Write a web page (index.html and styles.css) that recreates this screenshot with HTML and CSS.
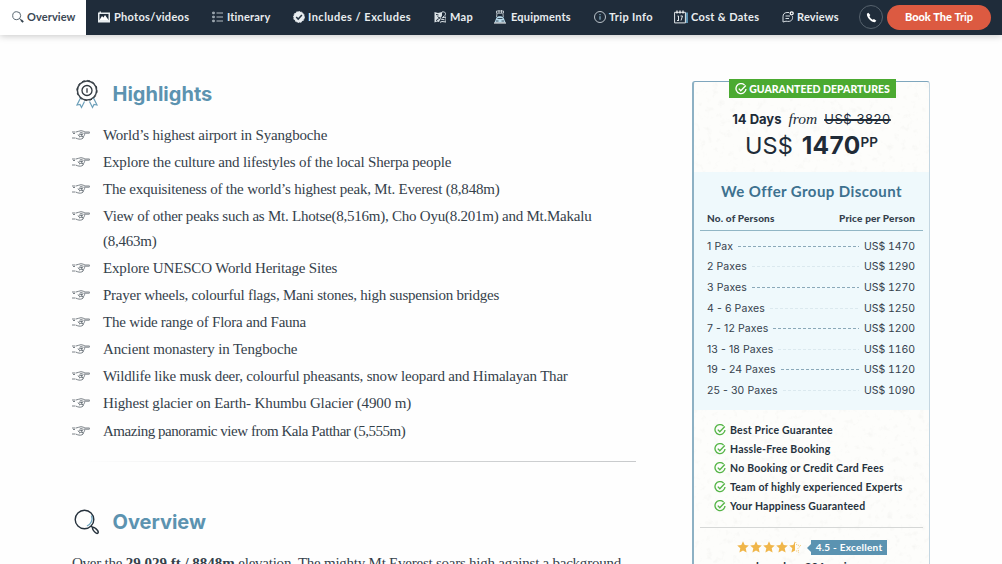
FILE: index.html
```html
<!DOCTYPE html>
<html lang="en">
<head>
<meta charset="utf-8">
<title>Everest Trip</title>
<link rel="stylesheet" href="styles.css">
</head>
<body>
<svg class="defs" aria-hidden="true">
  <symbol id="check" viewBox="0 0 12 12"><path d="M9.600 2.100A5 5 0 1 0 11 6M3.800 5.600 5.800 7.700 10.800 2.500" fill="none" stroke="currentColor" stroke-width="1.350"/></symbol>
  <symbol id="hand" viewBox="0 0 18 12"><path d="M0 3h3.500M0 9h3.500M1 4.500h2M4 3c2-.1 3-1.300 5-1.300 1.500 0 3 .8 4 1.300h4.200c.8 0 .8 1.200 0 1.200H11.500M4 9.200c2 .8 4 1.400 6 .6 1.500-.6 2-2 1.500-2.600 1.200-.6 1.500-2 .5-2.500M7.500 4.300c1-1 2-1 3.500 0M6.500 6.300c2-1.500 3-1 4.500-.5M7.500 8.200c1-1.300 2.500-1 3.500-.5M6 5.500l2 2.500M9 4.500l1.500 4" fill="none" stroke="#5a636b" stroke-width=".8"/></symbol>
  <symbol id="star" viewBox="0 0 12 12"><path d="m6 .3 1.700 3.800 4.100.4-3.100 2.800.9 4.200L6 9.400l-3.600 2.100.9-4.200L.2 4.500l4.100-.4z" fill="#f0b64a"/></symbol>
  <symbol id="lens" viewBox="0 0 26 26"><circle cx="10.500" cy="10.500" r="9.300" fill="none" stroke="#26323d" stroke-width="1.400"/><path d="M17.400 6.500a8 8 0 0 1-4.500 10.500" fill="none" stroke="#6fa6c0" stroke-width="1.300"/><path d="m17 17 1.800 1.600M18.700 18.400c1.600-.4 5.500 2.900 5.600 4.700-.4 1.900-1.900 1.400-3 .4-1.500-1.300-3.300-3.400-2.600-5.100z" fill="none" stroke="#26323d" stroke-width="1.500"/></symbol>
</svg>

<nav class="nav">
  <a class="nav-link active n-overview"><svg class="nav-icon" viewBox="0 0 12 12"><circle cx="4.700" cy="4.700" r="4" fill="none" stroke="#5b6872"/><path d="m7.600 7.600 1.200 1.200" stroke="#35434f"/><path d="m9 9 2.200 2.200" stroke="#35434f" stroke-width="1.800"/></svg><span>Overview</span></a>
  <a class="nav-link n-photos"><svg class="nav-icon" viewBox="0 0 12 12"><path d="M0 1.500h1.500V.5H3v1h9v10H0z" fill="#e8edf0"/><path d="M1.500 3h9v6h-9z" fill="#1f2c3a"/><path d="m1.500 9 2.500-4 1.500 1.500L7 4l3.500 5z" fill="#fff"/></svg><span>Photos/videos</span></a>
  <a class="nav-link n-itinerary"><svg class="nav-icon" viewBox="0 0 12 12"><g fill="none" stroke="#c5ced4" stroke-width=".9"><path d="M.7 1.200h1.600v1.500H.7zM.7 5.200h1.600v1.500H.7zM.7 9.200h1.600v1.500H.7zM4.500 2H11M4.500 6H11M4.500 10H11"/></g></svg><span>Itinerary</span></a>
  <a class="nav-link n-includes"><svg class="nav-icon" viewBox="0 0 12 12"><circle cx="6" cy="6" r="5.400" fill="#e8edf0" stroke="#e8edf0" stroke-dasharray="1.700 1"/><path d="m3.200 6 2 2.100 3.700-4" fill="none" stroke="#253442" stroke-width="1.500"/></svg><span>Includes / Excludes</span></a>
  <a class="nav-link n-map"><svg class="nav-icon" viewBox="0 0 12 12"><path d="M.5 1 4 2l4-1v3.500L5 11l-2-.5-2.500 1z" fill="#dce3e7"/><path d="M2 3.500 4.500 4M2.500 10c0-3 3.500-1 3.500-4M3.500 5.500l2 1.500" fill="none" stroke="#1f2c3a"/><path d="M8 1c5-1 4 4 1 5M8 6.800l4-.8v5l-4-.5-2 .8M6.500 8l4 .8" fill="none" stroke="#dce3e7"/></svg><span>Map</span></a>
  <a class="nav-link n-equip"><svg class="nav-icon" viewBox="0 0 12 14"><path d="M2.500 1h7v2.200h-7z" fill="none" stroke="#dce3e7" stroke-width=".8"/><path d="M5 0v3M7.500 0v3M3 3.500 2.500 7M9 4l.3 3" fill="none" stroke="#dce3e7" stroke-width=".8"/><path d="M2.500 7.500c2-2 5-1.500 7 0l2 5H.5z" fill="#b9dced"/><path d="M4.500 5h3M3.500 8.500h5M2 11h2.500M7.500 11H10" stroke="#1f2c3a" stroke-width=".8"/><path d="M0 13h12" stroke="#fff"/></svg><span>Equipments</span></a>
  <a class="nav-link n-info"><svg class="nav-icon" viewBox="0 0 12 12"><circle cx="6" cy="6" r="5.500" fill="none" stroke="#cdd5da" stroke-width=".9"/><path d="M6 5.200v3.500M6 3v1.200" stroke="#9acce3" stroke-width="1"/></svg><span>Trip Info</span></a>
  <a class="nav-link n-cost"><svg class="nav-icon wide" viewBox="0 0 14 13"><path d="M11.500 2H14v10.500h-2.500z" fill="#5c92b2"/><path d="M.6 1.800h10.800v10.600H.6z" fill="none" stroke="#e0e6e9"/><path d="M3 0v3M6 0v3M9 0v3" stroke="#fff" stroke-width="1.200"/><path d="M3.500 5.500h1v4.500M3 10h2M6.500 5.500h2L7 10" fill="none" stroke="#e0e6e9"/></svg><span>Cost &amp; Dates</span></a>
  <a class="nav-link n-reviews"><svg class="nav-icon" viewBox="0 0 12 12"><path d="M7 1.500H5a4.300 4.300 0 0 0-4 4.300V11l3-.8c5 1 7-1.200 6.500-5" fill="none" stroke="#d3dadf"/><path d="M3.500 5H8M3.500 7.500H7" stroke="#d3dadf"/><circle cx="9.700" cy="2.300" r="1.500" fill="none" stroke="#fff" stroke-width="1.300"/></svg><span>Reviews</span></a>
  <a class="phone"><svg class="phone-icon" viewBox="0 0 12 12"><path d="M2.500.7 1 2c-.5 4 4.500 9.200 8.700 9.200L11.300 9.600 8.700 7.500 7.300 8.400C5.700 7.700 4.300 6 3.800 4.700L4.700 3.300z" fill="#fff"/></svg></a>
  <a class="book"><span>Book The <b>Trip</b></span></a>
</nav>

<div class="page">
  <main class="content">
    <h2 class="heading">
      <svg class="heading-icon" viewBox="0 0 26 30"><path d="m6.500 19-3.500 7 3-.5 1.500 3 3-6M19.500 19l3.500 7-3-.5-1.500 3-3-6" fill="none" stroke="#6c9fb9" stroke-width="1.200"/><circle cx="13" cy="11.500" r="9.600" fill="#fff" stroke="#3d454c" stroke-width="1.500"/><circle cx="13" cy="11.500" r="10.100" fill="none" stroke="#30383f" stroke-dasharray="2.600 2.688"/><circle cx="13" cy="11.500" r="5" fill="none" stroke="#30383f" stroke-width="1.300"/><path d="M13 9.200v4.600" stroke="#30383f" stroke-width="1.300"/></svg>
      <span>Highlights</span>
    </h2>
    <ul class="list">
      <li><svg class="hand"><use href="#hand"/></svg><span class="snug">World’s highest airport in Syangboche</span></li>
      <li><svg class="hand"><use href="#hand"/></svg><span class="snug">Explore the culture and lifestyles of the local Sherpa people</span></li>
      <li><svg class="hand"><use href="#hand"/></svg><span>The exquisiteness of the world’s highest peak, Mt. Everest (8,848m)</span></li>
      <li><svg class="hand"><use href="#hand"/></svg><span class="tight">View of other peaks such as Mt. Lhotse(8,516m), Cho Oyu(8.201m) and Mt.Makalu<br>(8,463m)</span></li>
      <li><svg class="hand"><use href="#hand"/></svg><span class="snug">Explore UNESCO World Heritage Sites</span></li>
      <li><svg class="hand"><use href="#hand"/></svg><span class="tight">Prayer wheels, colourful flags, Mani stones, high suspension bridges</span></li>
      <li><svg class="hand"><use href="#hand"/></svg><span class="tight">The wide range of Flora and Fauna</span></li>
      <li><svg class="hand"><use href="#hand"/></svg><span class="open">Ancient monastery in Tengboche</span></li>
      <li><svg class="hand"><use href="#hand"/></svg><span>Wildlife like musk deer, colourful pheasants, snow leopard and Himalayan Thar</span></li>
      <li><svg class="hand"><use href="#hand"/></svg><span class="open">Highest glacier on Earth- Khumbu Glacier (4900 m)</span></li>
      <li><svg class="hand"><use href="#hand"/></svg><span class="tightest">Amazing panoramic view from Kala Patthar (5,555m)</span></li>
    </ul>
    <div class="rule"></div>
    <h2 class="heading second">
      <svg class="heading-icon lens"><use href="#lens"/></svg>
      <span>Overview</span>
    </h2>
    <p class="intro">Over the <b>29,029 ft / 8848m</b> elevation, The mighty Mt Everest soars high against a background</p>
  </main>

  <aside class="card">
    <svg class="paper" aria-hidden="true"><filter id="grain"><feTurbulence type="fractalNoise" baseFrequency=".16" numOctaves="3" seed="4"/><feColorMatrix values="0 0 0 0 .6  0 0 0 0 .6  0 0 0 0 .56  1.500 0 0 0 -.84"/></filter><rect width="100%" height="100%" filter="url(#grain)"/></svg>
    <div class="ribbon"><svg class="tick"><use href="#check"/></svg><span>GUARANTEED DEPARTURES</span></div>
    <div class="price">
      <div class="days"><b>14 Days</b><i>from</i><s>US$ 3820</s></div>
      <div class="amount"><span class="cur">US$</span><b>1470</b><sup>PP</sup></div>
    </div>
    <section class="discount">
      <h3>We Offer Group Discount</h3>
      <div class="thead"><span>No. of Persons</span><span>Price per Person</span></div>
      <div class="row"><span>1 Pax</span><i></i><span>US$ 1470</span></div>
      <div class="row"><span>2 Paxes</span><i></i><span>US$ 1290</span></div>
      <div class="row"><span>3 Paxes</span><i></i><span>US$ 1270</span></div>
      <div class="row"><span>4 - 6 Paxes</span><i></i><span>US$ 1250</span></div>
      <div class="row"><span>7 - 12 Paxes</span><i></i><span>US$ 1200</span></div>
      <div class="row"><span>13 - 18 Paxes</span><i></i><span>US$ 1160</span></div>
      <div class="row"><span>19 - 24 Paxes</span><i></i><span>US$ 1120</span></div>
      <div class="row"><span>25 - 30 Paxes</span><i></i><span>US$ 1090</span></div>
    </section>
    <ul class="perks">
      <li><svg class="tick"><use href="#check"/></svg><span>Best Price Guarantee</span></li>
      <li><svg class="tick"><use href="#check"/></svg><span>Hassle-Free Booking</span></li>
      <li><svg class="tick"><use href="#check"/></svg><span>No Booking or Credit Card Fees</span></li>
      <li><svg class="tick"><use href="#check"/></svg><span>Team of highly experienced Experts</span></li>
      <li><svg class="tick"><use href="#check"/></svg><span>Your Happiness Guaranteed</span></li>
    </ul>
    <div class="rating">
      <svg class="stars" viewBox="0 0 65 12"><use href="#star" width="12" height="12"/><use href="#star" x="13" width="12" height="12"/><use href="#star" x="26" width="12" height="12"/><use href="#star" x="39" width="12" height="12"/><path d="M58 .3v9.100l-3.600 2.100.9-4.200-3.100-2.800 4.100-.4z" fill="#f0b64a"/><path d="m58.500 1 1.400 3.100 4 .4-3 2.800.8 4-3.200-1.900" fill="none" stroke="#f0b64a" stroke-width=".7" stroke-dasharray="1.200 1"/></svg>
      <span class="score">4.5 - Excellent</span>
    </div>
    <div class="reviews">based on 206 reviews</div>
  </aside>
</div>
</body>
</html>
```
FILE: styles.css
```css
* { box-sizing: border-box; }
body { margin: 0; height: 564px; overflow: hidden; background: #fefefe; color: #26323d; font-family: Lato, "Open Sans", sans-serif; }
ul, h2, h3, p { margin: 0; padding: 0; list-style: none; }
.defs { position: absolute; width: 0; height: 0; }
span, b, s { white-space: nowrap; }

.nav { display: flex; height: 35px; background: #1f2c3a; box-shadow: 0 1px 7px rgba(0,0,0,.22); color: #e9edef; font-size: 11px; font-weight: 700; letter-spacing: .3px; }
.nav-link { display: flex; align-items: center; gap: 4px; padding: 0 0 1px 12px; height: 35px; flex: none; }
.nav-link span { padding-bottom: 1px; }
.nav-icon { width: 12px; height: 12px; flex: none; }
.nav-icon.wide { width: 14px; height: 14px; }
.active { background: #fff; color: #3b4854; }
.n-overview { width: 86px; gap: 3px; letter-spacing: .1px; }
.n-photos { width: 114px; }
.n-itinerary { width: 81px; gap: 3px; letter-spacing: .2px; }
.n-includes { width: 141px; gap: 3px; letter-spacing: .48px; }
.n-map { width: 60px; }
.n-equip { width: 100px; gap: 5px; letter-spacing: .2px; }
.n-equip .nav-icon { height: 14px; }
.n-info { width: 80px; gap: 3px; letter-spacing: .35px; }
.n-cost { width: 108px; gap: 3px; letter-spacing: .35px; }
.n-reviews { width: 89px; gap: 3px; letter-spacing: .2px; }
.phone { display: flex; align-items: center; justify-content: center; width: 24px; height: 24px; margin: 5px 4px 0 0; border: 1px solid #56626d; border-radius: 50%; flex: none; }
.phone-icon { width: 11px; height: 11px; }
.book { display: flex; align-items: center; justify-content: center; width: 104px; height: 25px; margin-top: 5px; padding-bottom: 2px; border-radius: 13px; background: #dc5a41; color: #fff; font-weight: 900; letter-spacing: 0; flex: none; }
.book b { font-weight: 700; }

.page { display: flex; align-items: flex-start; }
.content { width: 692px; padding: 43px 0 0 72px; flex: none; }
.heading { display: flex; align-items: center; gap: 12.500px; height: 31px; padding-left: 2px; color: #5c93b0; font: 700 20px Inter, sans-serif; }
.heading-icon { width: 26px; height: 30px; flex: none; }
.heading-icon.lens { height: 26px; }
.list { padding-top: 13.600px; font: 15px/24.500px "Liberation Serif", serif; color: #35414b; letter-spacing: -.2px; }
.list li { display: flex; gap: 13px; margin-bottom: 2.650px; }
.open { letter-spacing: -.13px; }
.snug { letter-spacing: -.17px; }
.tight { letter-spacing: -.235px; }
.tightest { letter-spacing: -.47px; }
.hand { width: 18px; height: 12px; margin-top: 6px; flex: none; }
.rule { width: 564px; height: 1px; margin-top: 17.500px; background: linear-gradient(90deg, #fff, #d2d4d5 60%, #c8cacc); }
.second { margin-top: 45px; }
.intro { margin-top: 13px; font: 15px/24px "Liberation Serif", serif; color: #35414b; white-space: nowrap; letter-spacing: -.24px; }
.intro b { letter-spacing: 0; }

.card { position: relative; width: 238px; height: 483px; margin-top: 46px; border: 1px solid #c4d6e1; border-top-color: #7ea6bd; border-left: 2px solid #8db1c4; border-bottom: 0; border-radius: 3px 3px 0 0; background: #fdfdfb; display: flex; flex-direction: column; flex: none; }
.paper { position: absolute; inset: 0; width: 100%; height: 100%; opacity: .25; }
.card > :not(.paper) { position: relative; }
.ribbon { display: flex; align-items: center; justify-content: center; gap: 2px; width: 167px; height: 19px; margin: -3px auto 0 35px; background: #4baa31; color: #fff; font-weight: 900; font-size: 10.500px; letter-spacing: 0; flex: none; }
.tick { width: 12px; height: 12px; flex: none; }
.price { height: 74px; flex: none; color: #202b37; }
.days { display: flex; justify-content: center; align-items: baseline; gap: 7px; padding-top: 12px; height: 33px; font: 13px/18px Inter, sans-serif; }
.days i { font: italic 15.500px/18px "Liberation Serif", serif; }
.days s { text-decoration-thickness: 2px; letter-spacing: .55px; }
.amount { display: flex; justify-content: center; height: 30px; font: 24.500px/29px Inter, sans-serif; }
.cur { font-size: 23.500px; }
.amount b { margin-left: 9px; letter-spacing: .3px; }
.amount sup { font-size: 13.500px; line-height: 22px; font-weight: 600; }
.discount { height: 238px; padding: 0 6px; background: #eff9fc; flex: none; color: #35414d; }
.discount h3 { height: 38px; text-align: center; font: 700 15px/39px Lato, sans-serif; letter-spacing: .42px; color: #3d718f; white-space: nowrap; }
.thead { display: flex; justify-content: space-between; height: 21px; padding: 0 8px 0 7px; border-bottom: 1px solid #91b6c5; font-size: 10px; line-height: 17px; font-weight: 900; letter-spacing: .18px; margin-bottom: 5px; }
.row { display: flex; align-items: center; height: 20.600px; padding: 0 8px 0 7px; gap: 5px; font: 10.500px Inter, sans-serif; letter-spacing: .1px; }
.row span:last-child { font-variant-numeric: tabular-nums; letter-spacing: -.05px; }
.row i { flex: 1; height: 1px; background: repeating-linear-gradient(90deg, #8ba9b9 0 3px, transparent 3px 5px); }
.row:nth-of-type(odd) i { opacity: .2; }
.perks { padding: 10px 0 0 20px; height: 117px; flex: none; font-size: 10.500px; font-weight: 700; letter-spacing: .22px; }
.perks li { display: flex; align-items: center; height: 19.100px; gap: 4px; }
.perks .tick { color: #55b547; }
.rating { display: flex; align-items: center; gap: 9px; height: 39px; margin: 0 6px; padding-left: 37px; border-top: 1px solid #d5d7d6; flex: none; }
.stars { width: 65px; height: 12px; }
.score { position: relative; width: 76px; height: 15px; background: #5b93b1; color: #fff; text-align: center; font-size: 10px; line-height: 15px; font-weight: 700; letter-spacing: .25px; }
.score::before { content: ""; position: absolute; left: -4px; top: 4px; border: 4px solid transparent; border-left: 0; border-right-color: #5b93b1; }
.reviews { text-align: center; font-size: 11.500px; font-weight: 700; line-height: 15px; margin-top: -7px; }
```
